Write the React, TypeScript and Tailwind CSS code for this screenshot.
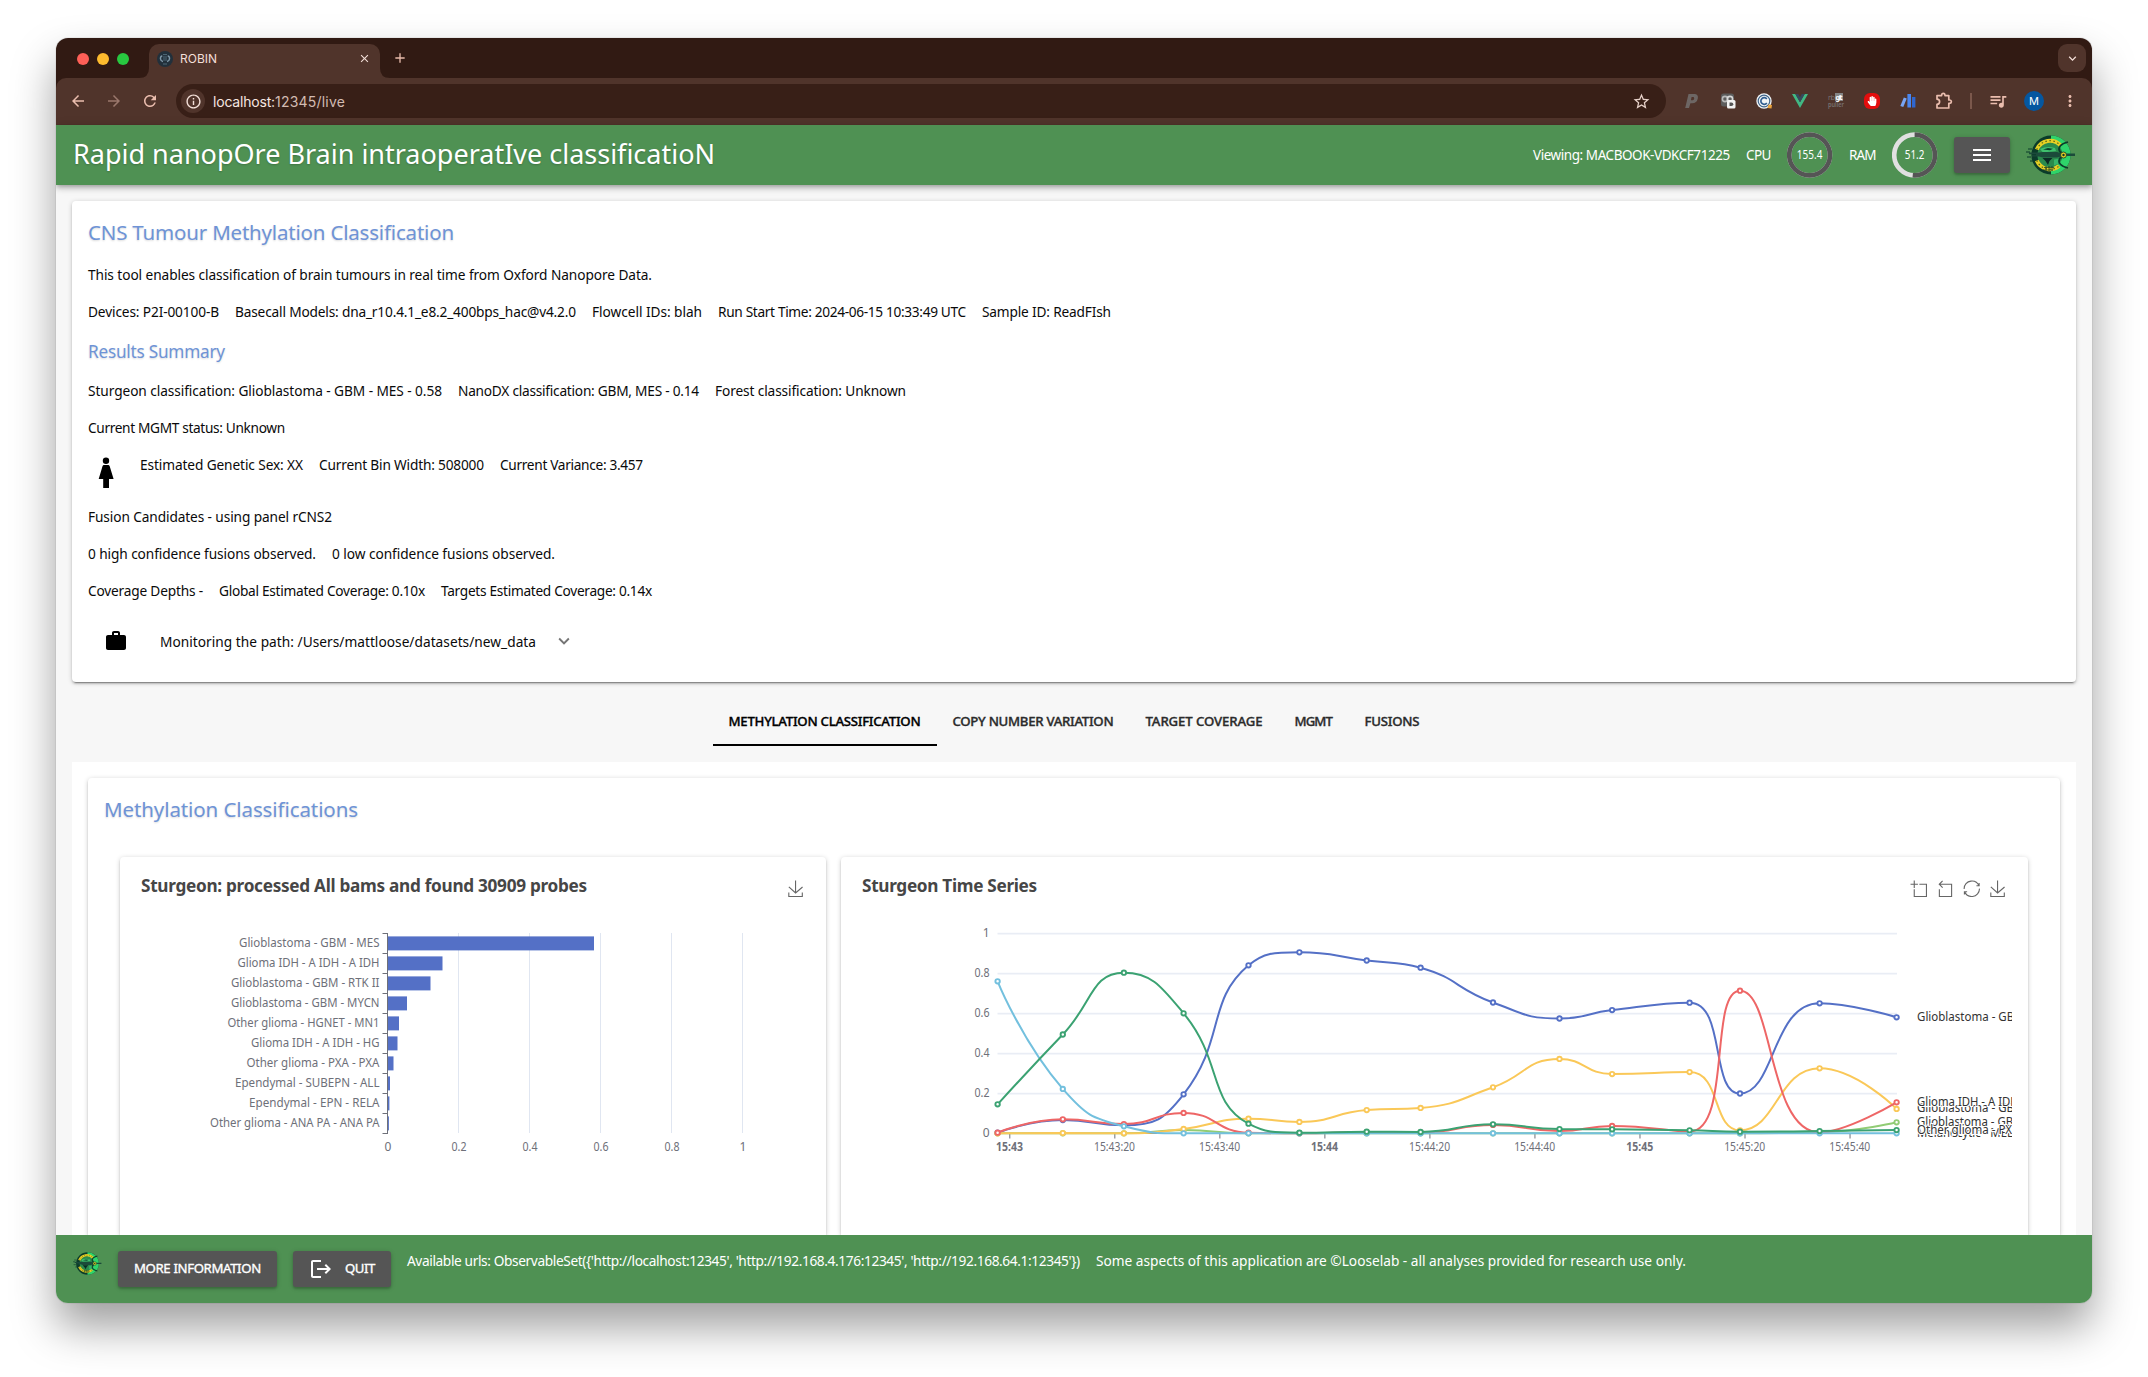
import { useLayoutEffect, useRef } from "react";
import {
  MdArrowBack,
  MdArrowForward,
  MdExpandMore,
  MdInfoOutline,
  MdLogout,
  MdMenu,
  MdMoreVert,
  MdQueueMusic,
  MdRefresh,
  MdStarBorder,
  MdWork,
  MdClose,
  MdAdd,
} from "react-icons/md";
import { FaHandPaper } from "react-icons/fa";

/* Single line of text whose tracking is adjusted so that it fills a given width. */
function Fit({ w, className = "", children }: { w: number; className?: string; children: string }) {
  const ref = useRef<HTMLSpanElement>(null);
  useLayoutEffect(() => {
    const el = ref.current;
    if (!el) return;
    el.style.letterSpacing = "0px";
    const natural = el.getBoundingClientRect().width;
    el.style.letterSpacing = `${(w - natural) / Math.max(1, children.length - 0.5)}px`;
  }, [w, children]);
  return (
    <span className={`block shrink-0 whitespace-nowrap ${className}`} style={{ width: w }}>
      <span ref={ref} className="inline-block whitespace-pre">
        {children}
      </span>
    </span>
  );
}

function Row({ items }: { items: [string, number][] }) {
  return (
    <div className="flex h-[21px] gap-4 text-[13.7px] leading-[21px] text-[#0a0a0a]">
      {items.map(([t, w]) => (
        <Fit key={t} w={w}>
          {t}
        </Fit>
      ))}
    </div>
  );
}

function RobinLogo({ className }: { className: string }) {
  return (
    <svg viewBox="0 0 50 42" className={className}>
      <circle cx="25" cy="21" r="19.6" fill="#0b3b2a" />
      <path d="M25 1.4 A19.6 19.6 0 0 1 25 40.6 Z" fill="#2fd36a" />
      <circle cx="24" cy="21" r="12.600" fill="#2a8a4c" />
      <path d="M10.800 15.500 A14.300 14.300 0 0 1 34.500 11.300" fill="none" stroke="#e6cf24" strokeWidth="4" />
      <path d="M10.800 26.500 A14.300 14.300 0 0 0 33 32" fill="none" stroke="#e6cf24" strokeWidth="4" />
      <path d="M10.800 15.500 A14.300 14.300 0 0 1 34.500 11.300 M10.800 26.500 A14.300 14.300 0 0 0 33 32" fill="none" stroke="#5b6a18" strokeWidth="1.200" strokeDasharray="1.500 2.500" />
      <path d="M14 15 Q21 11.500 29 14 L30 17 L17 18.500 Z" fill="#3fc06e" />
      <path d="M17 15.500 l5 -1.600 5 .8 -3 1.600 z" fill="#0b3b2a" />
      <path d="M3 18.500 h10 l4 -.5 h14 l5 1.500 h13 v2.500 h-12 l-6 1.500 H17 l-4 -1 H6 v-1.300 h4 v-1 H3 Z" fill="#1b4a3a" />
      <path d="M16.500 24 h10 l-3 3 -1.500 4 -2.500 -4 Z" fill="#0b2a25" />
      <path d="M28 25.500 l6 -1 -1 5 -5 2 Z" fill="#35b568" />
      <path d="M42 8 Q31 11 33.500 17 Q34.500 19 36 18 M42 34 Q31 31 33.500 25 Q34.500 23 36 24" fill="none" stroke="#0b3b2a" strokeWidth="1.800" />
      <circle cx="37.500" cy="21" r="3" fill="#e6cf24" stroke="#0b3b2a" strokeWidth="0.800" />
      <circle cx="37.500" cy="21" r="1.200" fill="#0b3b2a" />
      <path d="M18 33.500 h10 M17 36 h10 M20 32 v5 M23 32 v5 M26 32 v5" stroke="#0b3b2a" strokeWidth="0.700" />
      <path d="M2 15 h4 M0 18 h4 M1 23 h4 M4 27 h3" stroke="#0b3b2a" strokeWidth="1" />
    </svg>
  );
}

function Gauge({ value, dark }: { value: string; dark: number }) {
  const c = 2 * Math.PI * 20.4;
  return (
    <svg viewBox="0 0 46 46" className="h-[46px] w-[46px] shrink-0">
      <circle cx="22.600" cy="23" r="20.4" fill="none" stroke="#e0e0e0" strokeWidth="4.6" />
      <circle
        cx="22.600"
        cy="23"
        r="20.4"
        fill="none"
        stroke="#555555"
        strokeWidth="4.6"
        strokeDasharray={`${c * dark} ${c}`}
        transform="rotate(-90 22.6 23)"
      />
      <text
        x="22.600"
        y="27.300"
        textAnchor="middle"
        fontSize="12"
        fill="#fff"
        lengthAdjust="spacingAndGlyphs"
        textLength={value.length > 4 ? 25.5 : 19.5}
      >
        {value}
      </text>
    </svg>
  );
}

function Extensions() {
  return (
    <>
      <svg viewBox="0 0 16 16" className="h-4 w-4">
        <path
          d="M4.500 1 H11 Q14.600 1.600 13.800 5.400 Q12.800 10.300 8 10.200 L6.400 10.200 L5 15 H1.200 Z M7.600 4 L6.900 7.200 H8.800 Q10 6.900 10.200 5.400 Q10.200 4 9.200 4 Z"
          fill="#6d6664"
          fillRule="evenodd"
        />
      </svg>
      <svg viewBox="0 0 16 16" className="h-4 w-4">
        <rect x="1" y="0.500" width="13" height="13" rx="2.500" fill="#5c5c5c" />
        <circle cx="5" cy="6" r="2.600" fill="none" stroke="#b9b9b9" strokeWidth="1.600" />
        <circle cx="10" cy="6" r="2.600" fill="none" stroke="#d8d8d8" strokeWidth="1.600" />
        <rect x="7" y="7" width="8.500" height="8.500" rx="1.500" fill="#f2f2f2" />
        <path d="M9.500 9.500 h2 q1.800 .2 1.800 1.800 q-.1 1.700 -1.800 1.800 h-2 z" fill="#555" />
      </svg>
      <svg viewBox="0 0 16 16" className="h-4 w-4">
        <circle cx="8" cy="8" r="7.700" fill="#f1f4f6" />
        <circle cx="8" cy="8" r="5.800" fill="none" stroke="#40658a" strokeWidth="1.200" />
        <path d="M10.800 6 A3.300 3.300 0 1 0 10.800 10" fill="none" stroke="#315f92" strokeWidth="1.700" />
        <path d="M12.500 11.500 l3.500 .5 -.5 3.500 -4 -.5z" fill="#e9a13b" />
      </svg>
      <svg viewBox="0 0 16 16" className="h-4 w-4">
        <path d="M0 1 H3.300 L8 9.300 L12.700 1 H16 L8 15 Z" fill="#41b883" />
        <path d="M3.300 1 H6.200 L8 4.200 L9.800 1 H12.700 L8 9.300 Z" fill="#35495e" />
      </svg>
      <svg viewBox="0 0 16 16" className="h-4 w-4 overflow-visible">
        <rect x="7" y="0" width="8" height="8" fill="#858585" />
        <text x="0" y="7" fontSize="7" fill="#777170" textLength="7">
          nb
        </text>
        <text x="7.500" y="6.500" fontSize="7" fontWeight="700" fill="#fff" textLength="7">
          git
        </text>
        <text x="0" y="14" fontSize="6.500" fill="#777170" fontWeight="600" textLength="16" lengthAdjust="spacingAndGlyphs">
          puller
        </text>
      </svg>
      <span className="flex h-4 w-4 items-center justify-center rounded-[6px] bg-[#e40d0d]">
        <FaHandPaper className="h-[10px] w-[10px] text-white" />
      </span>
      <svg viewBox="0 0 16 16" className="h-4 w-4">
        <path d="M5.300 5 L1.800 13.500" stroke="#78a5f5" strokeWidth="3.200" strokeLinecap="butt" />
        <rect x="7.400" y="1" width="3.600" height="13.500" fill="#4a86f0" />
        <rect x="12" y="4" width="3.400" height="10.500" fill="#2f66cf" />
      </svg>
      <svg viewBox="0 0 18 18" className="-mx-px h-[18px] w-[18px]">
        <path
          d="M2 3.600 H6.600 V3 Q6.800 1.300 8.300 1.300 Q9.800 1.300 10 3 V3.600 H13.800 V8 H14.600 Q16.400 8.300 16.400 9.700 Q16.400 11.200 14.600 11.400 H13.800 V16 H2 V12.400 Q4.600 12 4.600 9.700 Q4.600 7.500 2 7.200 Z"
          fill="none"
          stroke="#eabdae"
          strokeWidth="1.700"
          strokeLinejoin="round"
        />
      </svg>
    </>
  );
}

function BrowserChrome() {
  return (
    <>
      <div className="flex h-10 shrink-0 bg-[#311a13] pl-5 font-[Inter,sans-serif]">
        <div className="flex w-[72px] items-center gap-2 pt-[2px]">
          <span className="ml-[1px] h-3 w-3 rounded-full bg-[#fe5f57]" />
          <span className="h-3 w-3 rounded-full bg-[#febb2e]" />
          <span className="h-3 w-3 rounded-full bg-[#28c840]" />
        </div>
        <div className="relative ml-[1px] mt-[6px] flex h-[34px] w-[231px] items-center rounded-t-[10px] bg-[#50342b] pb-[5px] pl-2">
          <svg viewBox="0 0 10 10" className="absolute -left-[10px] bottom-0 h-[10px] w-[10px]">
            <path d="M10 0 V10 H0 Q10 10 10 0Z" fill="#50342b" />
          </svg>
          <svg viewBox="0 0 10 10" className="absolute -right-[10px] bottom-0 h-[10px] w-[10px]">
            <path d="M0 0 V10 H10 Q0 10 0 0Z" fill="#50342b" />
          </svg>
          <svg viewBox="0 0 16 16" className="h-4 w-4 shrink-0">
            <circle cx="8" cy="8" r="8" fill="#22303b" />
            <path d="M5.300 5 Q3.200 5.200 3.500 8 Q3.800 10.200 6 10.400 M10.700 5 Q12.800 5.200 12.500 8 Q12.200 10.200 10 10.400" fill="none" stroke="#7f98a8" strokeWidth="1.500" />
            <path d="M6 3.600 h4 M7 5 v5 M9 5 v5 M6 13 h4" stroke="#56707f" strokeWidth="0.900" />
          </svg>
          <Fit w={37} className="ml-[7px] text-[12px] text-[#f3dfd8]">
            ROBIN
          </Fit>
          <MdClose className="ml-[141px] h-[13px] w-[13px] shrink-0 text-[#f3dfd8]" />
        </div>
        <MdAdd className="ml-[12px] mt-[12px] h-4 w-4 text-[#e8bbab]" />
        <div className="ml-auto mr-[6px] mt-[6px] flex h-7 w-7 items-center justify-center rounded-[9px] bg-[#50342b]">
          <MdExpandMore className="h-[15px] w-[15px] text-[#f3dfd8]" />
        </div>
      </div>
      <div className="shrink-0 bg-[#311a13]">
        <div className="flex h-[47px] items-center rounded-t-[10px] bg-[#50342b] pb-[1px] font-[Inter,sans-serif]">
          <MdArrowBack className="ml-[13px] h-[18px] w-[18px] text-[#eabdae]" />
          <MdArrowForward className="ml-[18px] h-[18px] w-[18px] text-[#9a776c]" />
          <MdRefresh className="ml-[18px] h-[18px] w-[18px] text-[#eabdae]" />
          <div className="ml-[17px] flex h-[34px] w-[1490px] items-center rounded-full bg-[#381f17] pl-[5px]">
            <span className="flex h-6 w-6 items-center justify-center rounded-full bg-[#50342b]">
              <MdInfoOutline className="h-[17px] w-[17px] text-[#f3dfd8]" />
            </span>
            <span className="ml-2 flex pt-[1px] text-[14px] leading-5">
              <Fit w={62} className="text-[#f5e6e1]">
                localhost:
              </Fit>
              <Fit w={70} className="text-[#d3bbb2]">
                12345/live
              </Fit>
            </span>
            <MdStarBorder className="ml-auto mr-[15px] h-[19px] w-[19px] text-[#e6d0c8]" />
          </div>
          <div className="ml-[18px] flex items-center gap-5 font-['Noto_Sans',sans-serif]">
            <Extensions />
          </div>
          <span className="ml-[18px] h-4 w-[2px] bg-[#7b584c]" />
          <MdQueueMusic className="ml-[16px] h-[20px] w-[20px] text-[#eabdae]" />
          <span className="ml-[16px] flex h-5 w-5 items-center justify-center rounded-full bg-[#0557a0] text-[11px] text-white">
            M
          </span>
          <MdMoreVert className="ml-[17px] h-[18px] w-[18px] text-[#eabdae]" />
        </div>
      </div>
    </>
  );
}

function Header() {
  return (
    <header className="z-10 flex h-[60px] shrink-0 items-center gap-4 bg-[#4f9153] pl-[17px] pr-4 text-white shadow-[0_2px_4px_-1px_rgba(0,0,0,0.2),0_4px_5px_rgba(0,0,0,0.14),0_1px_10px_rgba(0,0,0,0.12)]">
      <Fit w={642} className="mr-auto pb-[2px] text-[27px] leading-[36px] [text-shadow:0_1px_2px_rgba(0,0,0,0.2)]">
        Rapid nanopOre Brain intraoperatIve classificatioN
      </Fit>
      <Fit w={197} className="text-[13.5px]">
        Viewing: MACBOOK-VDKCF71225
      </Fit>
      <Fit w={25} className="text-[13.5px]">
        CPU
      </Fit>
      <Gauge value="155.4" dark={1} />
      <Fit w={27} className="text-[13.5px]">
        RAM
      </Fit>
      <Gauge value="51.2" dark={0.512} />
      <button className="flex h-9 w-14 items-center justify-center rounded-[3px] bg-[#555555] shadow-[0_1px_5px_rgba(0,0,0,0.2),0_2px_2px_rgba(0,0,0,0.14)]">
        <MdMenu className="h-6 w-6" />
      </button>
      <RobinLogo className="h-[42px] w-[50px]" />
    </header>
  );
}

function Summary() {
  return (
    <section className="h-[481px] shrink-0 rounded-[4px] bg-white p-4 shadow-[0_1px_5px_rgba(0,0,0,0.2),0_2px_2px_rgba(0,0,0,0.14),0_3px_1px_-2px_rgba(0,0,0,0.3)]">
      <div className="flex flex-col gap-4">
        <Fit w={366} className="h-[31px] text-[20.5px] leading-[30px] text-[#6e93d6] [text-shadow:0_1px_2px_rgba(0,0,0,0.15)]">
          CNS Tumour Methylation Classification
        </Fit>
        <Row items={[["This tool enables classification of brain tumours in real time from Oxford Nanopore Data.", 564]]} />
        <Row
          items={[
            ["Devices: P2I-00100-B", 131],
            ["Basecall Models: dna_r10.4.1_e8.2_400bps_hac@v4.2.0", 341],
            ["Flowcell IDs: blah", 110],
            ["Run Start Time: 2024-06-15 10:33:49 UTC", 248],
            ["Sample ID: ReadFIsh", 129],
          ]}
        />
        <Fit w={137} className="h-[26px] text-[17.2px] leading-[27px] text-[#6e93d6] [text-shadow:0_1px_2px_rgba(0,0,0,0.15)]">
          Results Summary
        </Fit>
        <Row
          items={[
            ["Sturgeon classification: Glioblastoma - GBM - MES - 0.58", 354],
            ["NanoDX classification: GBM, MES - 0.14", 241],
            ["Forest classification: Unknown", 191],
          ]}
        />
        <Row items={[["Current MGMT status: Unknown", 197]]} />
        <div className="flex h-9 gap-4">
          <svg viewBox="0 0 36 36" className="h-9 w-9">
            <circle cx="18" cy="6.700" r="3.200" />
            <path d="M15.900 11 H20.200 Q21.200 11 21.700 12.300 L25.600 25 H21 V34 H15.200 V25 H10.700 L14.500 12.300 Q14.900 11 15.900 11 Z" />
          </svg>
          <Row
            items={[
              ["Estimated Genetic Sex: XX", 163],
              ["Current Bin Width: 508000", 165],
              ["Current Variance: 3.457", 143],
            ]}
          />
        </div>
        <Row items={[["Fusion Candidates - using panel rCNS2", 244]]} />
        <Row
          items={[
            ["0 high confidence fusions observed.", 228],
            ["0 low confidence fusions observed.", 223],
          ]}
        />
        <Row
          items={[
            ["Coverage Depths -", 115],
            ["Global Estimated Coverage: 0.10x", 206],
            ["Targets Estimated Coverage: 0.14x", 211],
          ]}
        />
        <div className="flex h-12 items-center pl-4">
          <MdWork className="h-6 w-6 text-black" />
          <div className="ml-8">
            <Row items={[["Monitoring the path: /Users/mattloose/datasets/new_data", 376]]} />
          </div>
          <MdExpandMore className="ml-[17px] h-[22px] w-[22px] text-[#757575]" />
        </div>
      </div>
    </section>
  );
}

function Tabs() {
  const tabs: [string, number][] = [
    ["METHYLATION CLASSIFICATION", 192],
    ["COPY NUMBER VARIATION", 161],
    ["TARGET COVERAGE", 117],
    ["MGMT", 38],
    ["FUSIONS", 55],
  ];
  return (
    <nav className="mt-4 flex h-12 shrink-0 justify-center">
      {tabs.map(([t, w], i) => (
        <div
          key={t}
          className={
            i === 0
              ? "flex items-center border-b-2 border-black px-4 text-black"
              : "flex items-center border-b-2 border-transparent px-4 text-[#2b2b2b]"
          }
        >
          <Fit w={w} className="text-[13.2px] font-medium leading-[21px] [-webkit-text-stroke:0.35px_currentColor]">
            {t}
          </Fit>
        </div>
      ))}
    </nav>
  );
}

const TOOL = {
  zoom: "M0,13.5h26.9 M13.5,26.9V0 M32.1,13.5H58V58H13.5 V32.1",
  back: "M22,1.4L9.9,13.5l12.3,12.3 M10.3,13.5H54.9v44.6 H10.3v-26",
  restore:
    "M47,18.9h9.8V8.7 M56.3,20.1 C52.1,9,40.5,0.6,26.8,2.1C12.6,3.7,1.6,16.2,2.1,30.6 M13,41.1H3.1v10.2 M3.7,39.9c4.2,11.1,15.8,19.5,29.5,18 c14.2-1.6,25.2-14.1,24.7-28.5",
  save: "M4.7,22.9L29.3,45.5L54.7,23.4M4.6,43.6L4.6,58L53.8,58L53.8,43.6M29.2,45.1L29.2,0",
};

function Tool({ d }: { d: string }) {
  return (
    <svg viewBox="-2 -2 62 62" className="h-[17px] w-[17px]">
      <path d={d} fill="none" stroke="#666" strokeWidth="4" />
    </svg>
  );
}

const BARS: [string, number, number][] = [
  ["Glioblastoma - GBM - MES", 206, 140.5],
  ["Glioma IDH - A IDH - A IDH", 54.5, 142],
  ["Glioblastoma - GBM - RTK II", 42.5, 148.5],
  ["Glioblastoma - GBM - MYCN", 19, 148.5],
  ["Other glioma - HGNET - MN1", 11, 152],
  ["Glioma IDH - A IDH - HG", 9.5, 128.5],
  ["Other glioma - PXA - PXA", 5.5, 133],
  ["Ependymal - SUBEPN - ALL", 2, 144.5],
  ["Ependymal - EPN - RELA", 1.4, 130.5],
  ["Other glioma - ANA PA - ANA PA", 0.9, 169.5],
];

/* Horizontal bar chart; plot origin is at (268, 76) inside the card. */
function BarChart() {
  return (
    <svg viewBox="0 0 706 378" className="h-[378px] w-[706px] overflow-hidden" fontSize="12" fill="#6E7079">
      {[1, 2, 3, 4, 5].map((i) => (
        <line key={i} x1={267.5 + i * 71} x2={267.5 + i * 71} y1="76" y2="276" stroke="#E0E6F1" />
      ))}
      {BARS.map(([t, v, w], i) => (
        <g key={t}>
          <rect x="268" y={79.4 + i * 20} width={v} height="14" fill="#5470c6" />
          <text x={259.5 - w} y={89.800 + i * 20} textLength={w} lengthAdjust="spacingAndGlyphs">
            {t}
          </text>
        </g>
      ))}
      <line x1="267.500" x2="267.500" y1="76" y2="277" stroke="#6E7079" />
      {BARS.concat([BARS[0]]).map((_, i) => (
        <line key={i} x1="262.500" x2="268" y1={76.500 + i * 20} y2={76.500 + i * 20} stroke="#6E7079" />
      ))}
      {["0", "0.2", "0.4", "0.6", "0.8", "1"].map((t, i) => (
        <text
          key={t}
          x={268 + i * 71}
          y="293.700"
          textAnchor="middle"
          lengthAdjust="spacingAndGlyphs"
          textLength={t.length > 1 ? 15 : undefined}
        >
          {t}
        </text>
      ))}
    </svg>
  );
}

const XS = [156.6, 221.8, 282.9, 342.6, 407.5, 458.4, 525.7, 579.6, 652, 718.5, 771.1, 848.6, 899, 978.6, 1055.6];

type Series = { color: string; label: string; len: number; ly: number; v: number[] };

const SERIES: Series[] = [
  { color: "#5470c6", label: "Glioblastoma - GBM - MES", len: 140.5, ly: 164, v: [0.003, 0.066, 0.04, 0.195, 0.84, 0.905, 0.864, 0.828, 0.654, 0.574, 0.616, 0.653, 0.199, 0.65, 0.58] },
  { color: "#91cc75", label: "Glioblastoma - GBM - MYCN", len: 148.5, ly: 269, v: [0, 0, 0, 0.016, 0, 0, 0, 0, 0, 0, 0, 0, 0, 0.005, 0.055] },
  { color: "#fac858", label: "Glioblastoma - GBM - RTK II", len: 148.5, ly: 255.300, v: [0, 0.001, 0, 0.022, 0.073, 0.057, 0.116, 0.127, 0.23, 0.372, 0.296, 0.306, 0.015, 0.325, 0.122] },
  { color: "#ee6666", label: "Glioma IDH - A IDH - A IDH", len: 142, ly: 249, v: [0.003, 0.07, 0.046, 0.102, 0.003, 0, 0.006, 0.004, 0.042, 0.011, 0.037, 0.009, 0.713, 0.005, 0.155] },
  { color: "#73c0de", label: "Melanocytic - MELAN - MELAN", len: 160, ly: 280, v: [0.76, 0.222, 0.035, 0, 0, 0, 0, 0, 0, 0, 0, 0, 0, 0, 0] },
  { color: "#3ba272", label: "Other glioma - PXA - PXA", len: 133, ly: 277, v: [0.145, 0.494, 0.803, 0.6, 0.048, 0.003, 0.008, 0.007, 0.045, 0.021, 0.02, 0.015, 0.008, 0.011, 0.016] },
];

const clamp = (v: number, a: number, b: number) => Math.max(Math.min(v, Math.max(a, b)), Math.min(a, b));

/* Smooth path through the points whose control points never overshoot a neighbour. */
function smoothPath(pts: [number, number][]) {
  const s = 0.5;
  let d = `M${pts[0][0]},${pts[0][1]}`;
  let [c0x, c0y] = pts[0];
  for (let i = 1; i < pts.length; i++) {
    const [px, py] = pts[i - 1];
    const [x, y] = pts[i];
    let c1x = x;
    let c1y = y;
    let nx0 = x;
    let ny0 = y;
    if (i < pts.length - 1) {
      const [nx, ny] = pts[i + 1];
      const lp = Math.hypot(x - px, y - py);
      const ln = Math.hypot(nx - x, ny - y);
      const r = ln / (ln + lp);
      nx0 = clamp(x + (nx - px) * s * r, nx, x);
      ny0 = clamp(y + (ny - py) * s * r, ny, y);
      c1x = clamp(x - ((nx0 - x) * lp) / ln, px, x);
      c1y = clamp(y - ((ny0 - y) * lp) / ln, py, y);
      nx0 = x + ((x - c1x) * ln) / lp;
      ny0 = y + ((y - c1y) * ln) / lp;
    }
    d += `C${c0x},${c0y} ${c1x},${c1y} ${x},${y}`;
    c0x = nx0;
    c0y = ny0;
  }
  return d;
}

const TIMES = ["15:43", "15:43:20", "15:43:40", "15:44", "15:44:20", "15:44:40", "15:45", "15:45:20", "15:45:40"];

function LineChart() {
  const y = (v: number) => 276.300 - v * 200;
  return (
    <svg viewBox="0 0 1171 378" className="h-[378px] w-[1171px] overflow-hidden" fontSize="12" fill="#6E7079">
      {[0, 1, 2, 3, 4, 5].map((i) => (
        <g key={i}>
          {i > 0 && <line x1="156.500" x2="1056" y1={276.700 - i * 40} y2={276.700 - i * 40} stroke="#E9EDF5" strokeWidth="1.800" />}
          <text
            x="148.500"
            y={280.300 - i * 40}
            textAnchor="end"
            lengthAdjust="spacingAndGlyphs"
            textLength={i % 5 ? 15 : undefined}
          >
            {["0", "0.2", "0.4", "0.6", "0.8", "1"][i]}
          </text>
        </g>
      ))}
      <line x1="156.500" x2="1056" y1="276.500" y2="276.500" stroke="#6E7079" />
      {TIMES.map((t, i) => (
        <g key={t}>
          <line x1={168.800 + i * 105.03} x2={168.800 + i * 105.03} y1="276.500" y2="281.500" stroke="#6E7079" />
          <text
            x={168.500 + i * 105.03 - (i % 3 ? 20.500 : 13.500)}
            y="294"
            lengthAdjust="spacingAndGlyphs"
            textLength={i % 3 ? 41 : 27}
            fontWeight={i % 3 ? 400 : 700}
          >
            {t}
          </text>
        </g>
      ))}
      {SERIES.map((s) => {
        const pts = s.v.map((v, i) => [XS[i], y(v)] as [number, number]);
        return (
          <g key={s.color} stroke={s.color}>
            <path d={smoothPath(pts)} fill="none" strokeWidth="2" strokeLinejoin="bevel" />
            {pts.map(([px, py], i) => (
              <circle key={i} cx={px} cy={py} r="2.200" fill="#fff" strokeWidth="1.900" />
            ))}
          </g>
        );
      })}
      <svg x="1070" y="0" width="101.200" height="378">
        {[0, 2, 3, 1, 4, 5].map((k) => (
          <text
            key={k}
            x="6"
            y={SERIES[k].ly}
            textLength={SERIES[k].len}
            lengthAdjust="spacingAndGlyphs"
            fill="#333"
            stroke="#fff"
            strokeWidth="2.200"
            paintOrder="stroke"
          >
            {SERIES[k].label}
          </text>
        ))}
      </svg>
    </svg>
  );
}

const CARD = "relative rounded-t-[4px] bg-white shadow-[0_1px_5px_rgba(0,0,0,0.2),0_2px_2px_rgba(0,0,0,0.14)]";

function Panel() {
  return (
    <section className="mt-4 min-h-0 flex-1 overflow-hidden bg-white px-4 pt-4">
      <div className="h-full rounded-t-[4px] shadow-[0_1px_5px_rgba(0,0,0,0.2),0_2px_2px_rgba(0,0,0,0.14)]">
        <Fit w={254} className="ml-4 h-[47px] pt-4 text-[20.5px] leading-[30px] text-[#6e93d6] [text-shadow:0_1px_2px_rgba(0,0,0,0.15)]">
          Methylation Classifications
        </Fit>
        <div className="ml-8 mr-8 mt-8 flex gap-[15px]">
          <div className={`${CARD} w-[706px]`}>
            <div className="absolute left-[21px] top-4 text-[#464646]">
              <Fit w={446} className="text-[17.2px] font-bold leading-[26px]">
                Sturgeon: processed All bams and found 30909 probes
              </Fit>
            </div>
            <div className="absolute right-[22px] top-[23px]">
              <Tool d={TOOL.save} />
            </div>
            <BarChart />
          </div>
          <div className={`${CARD} w-[1187px]`}>
            <div className="absolute left-[21px] top-4 text-[#464646]">
              <Fit w={175} className="text-[17.2px] font-bold leading-[26px]">
                Sturgeon Time Series
              </Fit>
            </div>
            <div className="absolute right-[22px] top-[23px] flex gap-[9.500px]">
              <Tool d={TOOL.zoom} />
              <Tool d={TOOL.back} />
              <Tool d={TOOL.restore} />
              <Tool d={TOOL.save} />
            </div>
            <LineChart />
          </div>
        </div>
      </div>
    </section>
  );
}

function Footer() {
  const btn =
    "flex h-9 shrink-0 items-center rounded-[3px] bg-[#555555] px-4 shadow-[0_1px_5px_rgba(0,0,0,0.2),0_2px_2px_rgba(0,0,0,0.14)]";
  return (
    <footer className="z-10 flex h-[68px] shrink-0 items-start gap-4 bg-[#4f9153] pl-[17px] pr-4 pt-4 text-[13.7px] leading-[21px] text-white">
      <RobinLogo className="h-[25px] w-[29px]" />
      <div className={btn}>
        <Fit w={127} className="pb-[2px] text-[13.2px] [-webkit-text-stroke:0.35px_currentColor]">
          MORE INFORMATION
        </Fit>
      </div>
      <div className={btn}>
        <MdLogout className="-mt-px h-6 w-6" />
        <Fit w={30} className="ml-3 pb-[2px] text-[13.2px] [-webkit-text-stroke:0.35px_currentColor]">
          QUIT
        </Fit>
      </div>
      <Fit w={673} className="leading-[19px]">
        {"Available urls: ObservableSet({'http://localhost:12345', 'http://192.168.4.176:12345', 'http://192.168.64.1:12345'})"}
      </Fit>
      <Fit w={590} className="leading-[19px]">
        Some aspects of this application are ©Looselab - all analyses provided for research use only.
      </Fit>
    </footer>
  );
}

export default function App() {
  return (
    <div className="h-[1377px] w-[2148px] overflow-hidden bg-white pl-[56px] pt-[38px] font-['Noto_Sans',sans-serif]">
      <div className="flex h-[1265px] w-[2036px] flex-col overflow-hidden rounded-[12px] bg-[#f7f7f7] shadow-[0_0_1px_rgba(0,0,0,0.5),0_24px_44px_rgba(0,0,0,0.38)]">
        <BrowserChrome />
        <Header />
        <main className="flex min-h-0 flex-1 flex-col overflow-hidden px-4 pt-4">
          <Summary />
          <Tabs />
          <Panel />
        </main>
        <Footer />
      </div>
    </div>
  );
}
